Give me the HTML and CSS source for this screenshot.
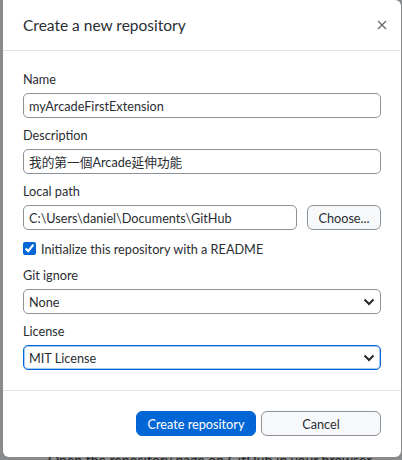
FILE: index.html
```html
<!DOCTYPE html>
<html lang="en">
<head>
<meta charset="utf-8">
<link rel="stylesheet" href="styles.css">
</head>
<body>
<div class="backdrop">
  <div class="dialog">
    <div class="dialog-header">
      <h1 class="title">Create a new repository</h1>
      <svg class="close" width="10" height="10" viewBox="0 0 10 10"><path d="M1 1L9 9M9 1L1 9" stroke="#5f656b" stroke-width="1.2" fill="none"/></svg>
    </div>
    <div class="dialog-body">
      <div class="field">
        <div class="label">Name</div>
        <input class="text-input" type="text" value="myArcadeFirstExtension">
      </div>
      <div class="field">
        <div class="label">Description</div>
        <input class="text-input" type="text" value="我的第一個Arcade延伸功能">
      </div>
      <div class="field">
        <div class="label">Local path</div>
        <div class="path-row">
          <input class="text-input path-input" type="text" value="C:\Users\daniel\Documents\GitHub">
          <div class="btn choose">Choose...</div>
        </div>
      </div>
      <div class="check-row">
        <input class="check" type="checkbox" checked>
        <span class="check-label">Initialize this repository with a README</span>
      </div>
      <div class="field">
        <div class="label">Git ignore</div>
        <div class="select">
          <span>None</span>
          <svg class="chev" width="12" height="8" viewBox="0 0 12 8"><path d="M1.5 1.5L6 6L10.5 1.5" stroke="#24292e" stroke-width="2" fill="none"/></svg>
        </div>
      </div>
      <div class="field">
        <div class="label">License</div>
        <div class="select focused">
          <span>MIT License</span>
          <svg class="chev" width="12" height="8" viewBox="0 0 12 8"><path d="M1.5 1.5L6 6L10.5 1.5" stroke="#24292e" stroke-width="2" fill="none"/></svg>
        </div>
      </div>
    </div>
    <div class="dialog-footer">
      <div class="btn primary">Create repository</div>
      <div class="btn cancel">Cancel</div>
    </div>
  </div>
  <div class="under-text">Open the repository page on GitHub in your browser</div>
</div>
</body>
</html>
```
FILE: styles.css
```css
html, body {
  margin: 0;
  padding: 0;
}
body {
  width: 402px;
  height: 460px;
  overflow: hidden;
  background: #888a8c;
  font-family: Lato, "Noto Sans CJK TC", sans-serif;
  color: #2a2e33;
}
.backdrop {
  padding-left: 3px;
}
.dialog {
  position: relative;
  z-index: 1;
  width: 398px;
  height: 457px;
  background: #fff;
  border-radius: 0 6px 6px 6px;
  box-sizing: border-box;
}
.dialog-header {
  height: 51px;
  box-sizing: border-box;
  border-bottom: 1px solid #e1e4e8;
  display: flex;
  align-items: center;
  justify-content: space-between;
  padding: 0 14px 0 20px;
}
.title {
  margin: 0;
  font-size: 15.5px;
  font-weight: 400;
  line-height: 20px;
  padding-bottom: 1px;
}
.close {
  display: block;
}
.dialog-body {
  padding: 20px;
  border-bottom: 1px solid #e1e4e8;
  display: flex;
  flex-direction: column;
  gap: 9px;
}
.field {
  display: flex;
  flex-direction: column;
  gap: 5px;
}
.label {
  font-size: 12.7px;
  line-height: 17px;
}
.text-input {
  height: 25px;
  box-sizing: border-box;
  border: 1px solid #8a9199;
  border-radius: 5px;
  padding: 0 5px;
  font-family: Lato, "Noto Sans CJK TC", sans-serif;
  font-size: 12.7px;
  color: #2a2e33;
  background: #fff;
  outline: none;
  width: 100%;
  margin: 0;
}
.path-row {
  display: flex;
  gap: 10px;
}
.path-input {
  flex: 1;
  width: auto;
}
.btn {
  height: 25px;
  box-sizing: border-box;
  border-radius: 6px;
  font-size: 12.7px;
  display: flex;
  align-items: center;
  justify-content: center;
}
.choose {
  width: 74px;
  border: 1px solid #8a9199;
  background: #f6f8fa;
}
.check-row {
  height: 19px;
  display: flex;
  align-items: center;
  gap: 5px;
}
.check {
  width: 13px;
  height: 13px;
  margin: 0;
  accent-color: #0366d6;
}
.check-label {
  font-size: 12.7px;
}
.select {
  height: 25px;
  box-sizing: border-box;
  border: 1px solid #8a9199;
  border-radius: 5px;
  padding: 0 5px;
  font-size: 12.7px;
  display: flex;
  align-items: center;
  justify-content: space-between;
}
.select.focused {
  border-color: #0366d6;
  box-shadow: inset 0 0 0 1px rgba(3, 102, 214, 0.35);
}
.chev {
  display: block;
}
.dialog-footer {
  padding: 20px;
  display: flex;
  justify-content: flex-end;
  gap: 5px;
}
.primary {
  width: 120px;
  background: #0366d6;
  color: #fff;
  border: 1px solid #0366d6;
}
.cancel {
  width: 120px;
  background: #f6f8fa;
  border: 1px solid #8a9199;
}
.under-text {
  margin-top: -5px;
  padding-left: 45px;
  font-size: 14px;
  line-height: 16px;
  color: #222;
}
```
